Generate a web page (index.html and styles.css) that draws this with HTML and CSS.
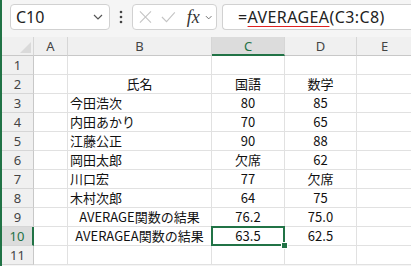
FILE: index.html
```html
<!DOCTYPE html>
<html lang="ja">
<head>
    <meta charset="UTF-8">
    <title>AVERAGEA</title>
    <link rel="stylesheet" href="styles.css">
</head>
<body>
    <div class="app">
        <div class="toolbar">
            <div class="namebox">
                <span>C10</span>
                <svg class="chev" width="10" height="6" viewBox="0 0 10 6"><path d="M1 1 L5 5 L9 1" fill="none" stroke="#555" stroke-width="1.2"/></svg>
            </div>
            <div class="dots">
                <svg width="4" height="14" viewBox="0 0 4 14"><circle cx="2" cy="2" r="1.3" fill="#444"/><circle cx="2" cy="7" r="1.3" fill="#444"/><circle cx="2" cy="12" r="1.3" fill="#444"/></svg>
            </div>
            <div class="fxbox">
                <svg width="14" height="14" viewBox="0 0 14 14"><path d="M1 1 L13 13 M13 1 L1 13" stroke="#c4c4c4" stroke-width="1.2"/></svg>
                <svg width="16" height="12" viewBox="0 0 16 12"><path d="M1 6 L6 11 L15 1" fill="none" stroke="#c4c4c4" stroke-width="1.2"/></svg>
                <span class="fx">fx</span>
                <svg class="chev-sm" width="8" height="5" viewBox="0 0 8 5"><path d="M1 1 L4 4 L7 1" fill="none" stroke="#666" stroke-width="1"/></svg>
            </div>
            <div class="formula">=<span class="fn">AVERAGEA</span>(C3:C8)</div>
        </div>

        <div class="sheet">
            <div class="corner"><span class="tri"></span></div>
            <div class="colhead">A</div>
            <div class="colhead">B</div>
            <div class="colhead active">C</div>
            <div class="colhead">D</div>
            <div class="colhead">E</div>

            <div class="rowhead">1</div>
            <div class="cell"></div><div class="cell"></div><div class="cell"></div><div class="cell"></div><div class="cell"></div>

            <div class="rowhead">2</div>
            <div class="cell"></div><div class="cell center">氏名</div><div class="cell center">国語</div><div class="cell center">数学</div><div class="cell"></div>

            <div class="rowhead">3</div>
            <div class="cell"></div><div class="cell">今田浩次</div><div class="cell center">80</div><div class="cell center">85</div><div class="cell"></div>

            <div class="rowhead">4</div>
            <div class="cell"></div><div class="cell">内田あかり</div><div class="cell center">70</div><div class="cell center">65</div><div class="cell"></div>

            <div class="rowhead">5</div>
            <div class="cell"></div><div class="cell">江藤公正</div><div class="cell center">90</div><div class="cell center">88</div><div class="cell"></div>

            <div class="rowhead">6</div>
            <div class="cell"></div><div class="cell">岡田太郎</div><div class="cell center">欠席</div><div class="cell center">62</div><div class="cell"></div>

            <div class="rowhead">7</div>
            <div class="cell"></div><div class="cell">川口宏</div><div class="cell center">77</div><div class="cell center">欠席</div><div class="cell"></div>

            <div class="rowhead">8</div>
            <div class="cell"></div><div class="cell">木村次郎</div><div class="cell center">64</div><div class="cell center">75</div><div class="cell"></div>

            <div class="rowhead">9</div>
            <div class="cell"></div><div class="cell center">AVERAGE関数の結果</div><div class="cell center">76.2</div><div class="cell center">75.0</div><div class="cell"></div>

            <div class="rowhead active">10</div>
            <div class="cell"></div><div class="cell center">AVERAGEA関数の結果</div><div class="cell center selected">63.5</div><div class="cell center">62.5</div><div class="cell"></div>

            <div class="rowhead">11</div>
            <div class="cell"></div><div class="cell"></div><div class="cell"></div><div class="cell"></div><div class="cell"></div>
        </div>
    </div>
</body>
</html>
```

FILE: styles.css
```css
body {
    margin: 0;
    padding: 0;
    background-color: #fff;
    font-family: 'Noto Sans', sans-serif;
    overflow: hidden;
}
.app {
    border-left: 2px solid #217346;
    height: 266px;
    background-color: #f5f5f5;
}
.toolbar {
    display: flex;
    align-items: center;
    height: 37px;
    padding-left: 8px;
    box-sizing: border-box;
}
.namebox {
    display: flex;
    align-items: center;
    justify-content: space-between;
    width: 100px;
    height: 26px;
    box-sizing: border-box;
    background: #fff;
    border: 1px solid #d1d1d1;
    border-radius: 4px;
    padding: 0 6px 0 5px;
    margin-top: -3px;
    font-size: 16px;
    color: #222;
}
.dots {
    width: 22px;
    display: flex;
    justify-content: center;
    margin-top: -3px;
}
.fxbox {
    display: flex;
    align-items: center;
    width: 85px;
    height: 26px;
    box-sizing: border-box;
    background: #fff;
    border: 1px solid #d1d1d1;
    border-radius: 4px;
    padding: 0 4px 0 6px;
    gap: 9px;
    margin-top: -3px;
}
.fx {
    font-family: 'Liberation Serif', serif;
    font-style: italic;
    font-size: 18px;
    color: #333;
    margin-left: 2px;
    margin-right: -4px;
}
.formula {
    flex: 1;
    height: 26px;
    box-sizing: border-box;
    background: #fff;
    border: 1px solid #d1d1d1;
    border-right: none;
    border-radius: 4px 0 0 4px;
    margin-left: 5px;
    margin-top: -3px;
    padding-left: 15px;
    font-size: 16px;
    line-height: 24px;
    color: #222;
    letter-spacing: 0.4px;
}
.fn {
    text-decoration: underline;
    text-decoration-color: #e02020;
    text-underline-offset: 3px;
}
.sheet {
    display: grid;
    grid-template-columns: 32px 34px 144px 73px 72px 56px;
    grid-auto-rows: 19px;
}
.corner,
.colhead {
    background: #f0f0f0;
    border-right: 1px solid #d6d6d6;
    border-bottom: 1px solid #c8c8c8;
    box-sizing: border-box;
    position: relative;
}
.corner .tri {
    position: absolute;
    right: 2px;
    bottom: 2px;
    width: 0;
    height: 0;
    border-left: 11px solid transparent;
    border-bottom: 11px solid #dadada;
}
.colhead {
    font-size: 13px;
    color: #444;
    text-align: center;
    line-height: 18px;
}
.colhead.active {
    background: #dcdcdc;
    color: #1e7145;
    border-bottom: 2px solid #217346;
}
.rowhead {
    background: #f0f0f0;
    border-right: 1px solid #c8c8c8;
    border-bottom: 1px solid #d6d6d6;
    box-sizing: border-box;
    font-size: 13px;
    color: #444;
    text-align: center;
    line-height: 18px;
}
.rowhead.active {
    background: #dcdcdc;
    color: #1e7145;
    border-right: 2px solid #217346;
}
.cell {
    background: #fff;
    border-right: 1px solid #e1e1e1;
    border-bottom: 1px solid #e1e1e1;
    box-sizing: border-box;
    font-family: 'Noto Sans CJK JP', sans-serif;
    font-size: 13px;
    line-height: 18px;
    color: #111;
    padding-left: 2px;
    white-space: nowrap;
}
.cell.center {
    text-align: center;
    padding-left: 0;
}
.cell.selected {
    position: relative;
}
.cell.selected::after {
    content: "";
    position: absolute;
    left: -1px;
    top: -1px;
    right: -1px;
    bottom: -1px;
    border: 2px solid #217346;
}
.cell.selected::before {
    content: "";
    position: absolute;
    right: -4px;
    bottom: -4px;
    width: 5px;
    height: 5px;
    background: #217346;
    border: 1px solid #fff;
    z-index: 1;
}
```
